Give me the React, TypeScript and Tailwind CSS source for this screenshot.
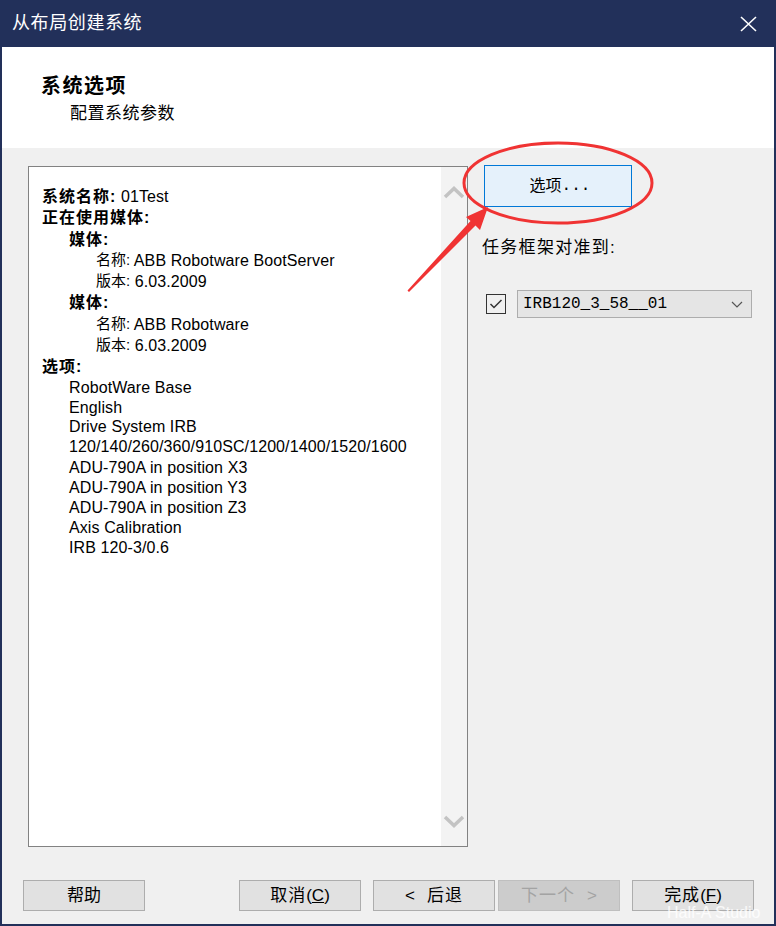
import React from "react";

const cjk = { fontFamily: '"Liberation Sans", "Noto Sans CJK SC", sans-serif' };
const mono = { fontFamily: '"Liberation Mono", "Noto Sans CJK SC", monospace' };

type Row = { level: number; label?: string; bold?: boolean; value?: string; h: number };

const rows: Row[] = [
  { level: 0, label: "系统名称:", bold: true, value: " 01Test", h: 21 },
  { level: 0, label: "正在使用媒体:", bold: true, h: 22 },
  { level: 1, label: "媒体:", bold: true, h: 21 },
  { level: 2, label: "名称:", value: " ABB Robotware BootServer", h: 21 },
  { level: 2, label: "版本:", value: " 6.03.2009", h: 21 },
  { level: 1, label: "媒体:", bold: true, h: 22 },
  { level: 2, label: "名称:", value: " ABB Robotware", h: 21 },
  { level: 2, label: "版本:", value: " 6.03.2009", h: 21 },
  { level: 0, label: "选项:", bold: true, h: 21 },
  { level: 1, value: "RobotWare Base", h: 21 },
  { level: 1, value: "English", h: 19 },
  { level: 1, value: "Drive System IRB", h: 20 },
  { level: 1, value: "120/140/260/360/910SC/1200/1400/1520/1600", h: 20 },
  { level: 1, value: "ADU-790A in position X3", h: 21 },
  { level: 1, value: "ADU-790A in position Y3", h: 20 },
  { level: 1, value: "ADU-790A in position Z3", h: 19 },
  { level: 1, value: "Axis Calibration", h: 21 },
  { level: 1, value: "IRB 120-3/0.6", h: 20 },
];

const indent = ["pl-[13px]", "pl-[40px]", "pl-[67px]"];

const WinButton = ({ children, disabled, className }: { children: React.ReactNode; disabled?: boolean; className?: string }) => (
  <div
    className={`w-[122px] h-[31px] flex items-center justify-center text-[17px] border ${
      disabled ? "bg-[#cccccc] border-[#bfbfbf] text-[#a3a3a3]" : "bg-[#e1e1e1] border-[#adadad] text-black"
    } ${className ?? ""}`}
  >
    {children}
  </div>
);

const Chevron = ({ up }: { up?: boolean }) => (
  <svg width="22" height="13" viewBox="0 0 22 13">
    <polyline
      points={up ? "2,11 11,2.5 20,11" : "2,2 11,10.5 20,2"}
      fill="none"
      stroke="#c3c3c3"
      strokeWidth="3.5"
    />
  </svg>
);

export default function App() {
  return (
    <div className="relative w-[776px] h-[926px] flex flex-col bg-[#f0f0f0] border-x-2 border-b-2 border-[#22305a] overflow-hidden" style={cjk}>
      {/* title bar */}
      <div className="h-[47px] bg-[#22305a] flex items-center justify-between pl-[10px] pr-[17px] shrink-0">
        <span className="text-white text-[18px] tracking-[0.6px]">从布局创建系统</span>
        <svg width="17" height="16" viewBox="0 0 17 16">
          <path d="M1 1 L16 15 M16 1 L1 15" stroke="#ffffff" strokeWidth="1.6" />
        </svg>
      </div>

      {/* header */}
      <div className="h-[101px] bg-white shrink-0 pl-[39px] pt-[27px]">
        <div className="text-[20px] font-bold leading-[24px] tracking-[1.5px] text-black">系统选项</div>
        <div className="text-[17px] leading-[22px] pl-[29px] mt-[5px] text-black tracking-[0.5px]">配置系统参数</div>
      </div>

      {/* body */}
      <div className="flex pl-[26px] pt-[18px] gap-[14px]">
        <div className="w-[440px] h-[681px] border border-[#828282] bg-white flex">
          <div className="flex-1 pt-[19px] text-black">
            {rows.map((r, i) => (
              <div key={i} className={`${indent[r.level]} flex items-center whitespace-pre`} style={{ height: r.h }}>
                {r.label && (
                  <span className={r.bold ? "text-[16px] font-bold tracking-[1px]" : "text-[15px]"}>{r.label}</span>
                )}
                {r.value && <span className="text-[16px] tracking-[0.1px]">{r.value}</span>}
              </div>
            ))}
          </div>
          <div className="w-[26px] bg-[#f3f3f3] flex flex-col items-center justify-between pt-[19px] pb-[18px]">
            <Chevron up />
            <Chevron />
          </div>
        </div>

        <div className="flex flex-col">
          <div className="ml-[2px] -mt-[1px] w-[148px] h-[42px] bg-[#e5f1fb] border border-[#0078d7] flex items-center justify-center text-[16px] text-black">
            <span className="pl-[4px]">选项</span>
            <span style={mono} className="text-[16px]">...</span>
          </div>
          <div className="mt-[30px] text-[17px] leading-[22px] tracking-[1.3px] text-black">任务框架对准到:</div>
          <div className="mt-[31px] flex items-center">
            <div className="ml-[4px] w-[20px] h-[20px] border border-[#333333] bg-[#f0f0f0] flex items-center justify-center">
              <svg width="14" height="12" viewBox="0 0 14 12">
                <polyline points="1.5,6 5,9.5 12.5,2" fill="none" stroke="#333333" strokeWidth="1.5" />
              </svg>
            </div>
            <div className="ml-[11px] w-[235px] h-[28px] bg-[#e5e5e5] border border-[#adadad] flex items-center justify-between pl-[5px] pr-[8px]">
              <span style={mono} className="text-[16px] text-black">IRB120_3_58__01</span>
              <svg width="12" height="7" viewBox="0 0 12 7">
                <polyline points="1,1 6,6 11,1" fill="none" stroke="#555555" strokeWidth="1.2" />
              </svg>
            </div>
          </div>
        </div>
      </div>

      {/* footer buttons */}
      <div className="flex items-center pl-[21px] mt-[33px]">
        <WinButton>帮助</WinButton>
        <WinButton className="ml-[94px]">
          <span className="tracking-[1px]">取消</span>
          <span>(<span className="underline">C</span>)</span>
        </WinButton>
        <WinButton className="ml-[12px]">
          <span className="mr-[12px]">&lt;</span>
          <span className="tracking-[1px]">后退</span>
        </WinButton>
        <WinButton disabled className="ml-[3px]">
          <span className="tracking-[1px]">下一个</span>
          <span className="ml-[12px]">&gt;</span>
        </WinButton>
        <WinButton className="ml-[12px]">
          <span className="tracking-[1px]">完成</span>
          <span>(<span className="underline">F</span>)</span>
        </WinButton>
      </div>

      {/* annotation overlay */}
      <svg className="absolute left-[-2px] top-0 pointer-events-none" width="776" height="926" viewBox="0 0 776 926">
        <ellipse cx="558" cy="183" rx="94" ry="40" fill="none" stroke="#f03333" strokeWidth="3" />
        <polygon
          points="488,207 480,230 475.5,225.5 409,292 407.5,290.5 470.5,221 466,217"
          fill="#f03333"
        />
      </svg>

      <span className="absolute left-[665px] top-[901px] text-[16px] text-white/80 pointer-events-none" style={{ fontFamily: '"Liberation Sans", sans-serif' }}>
        Half-A Studio
      </span>
    </div>
  );
}
